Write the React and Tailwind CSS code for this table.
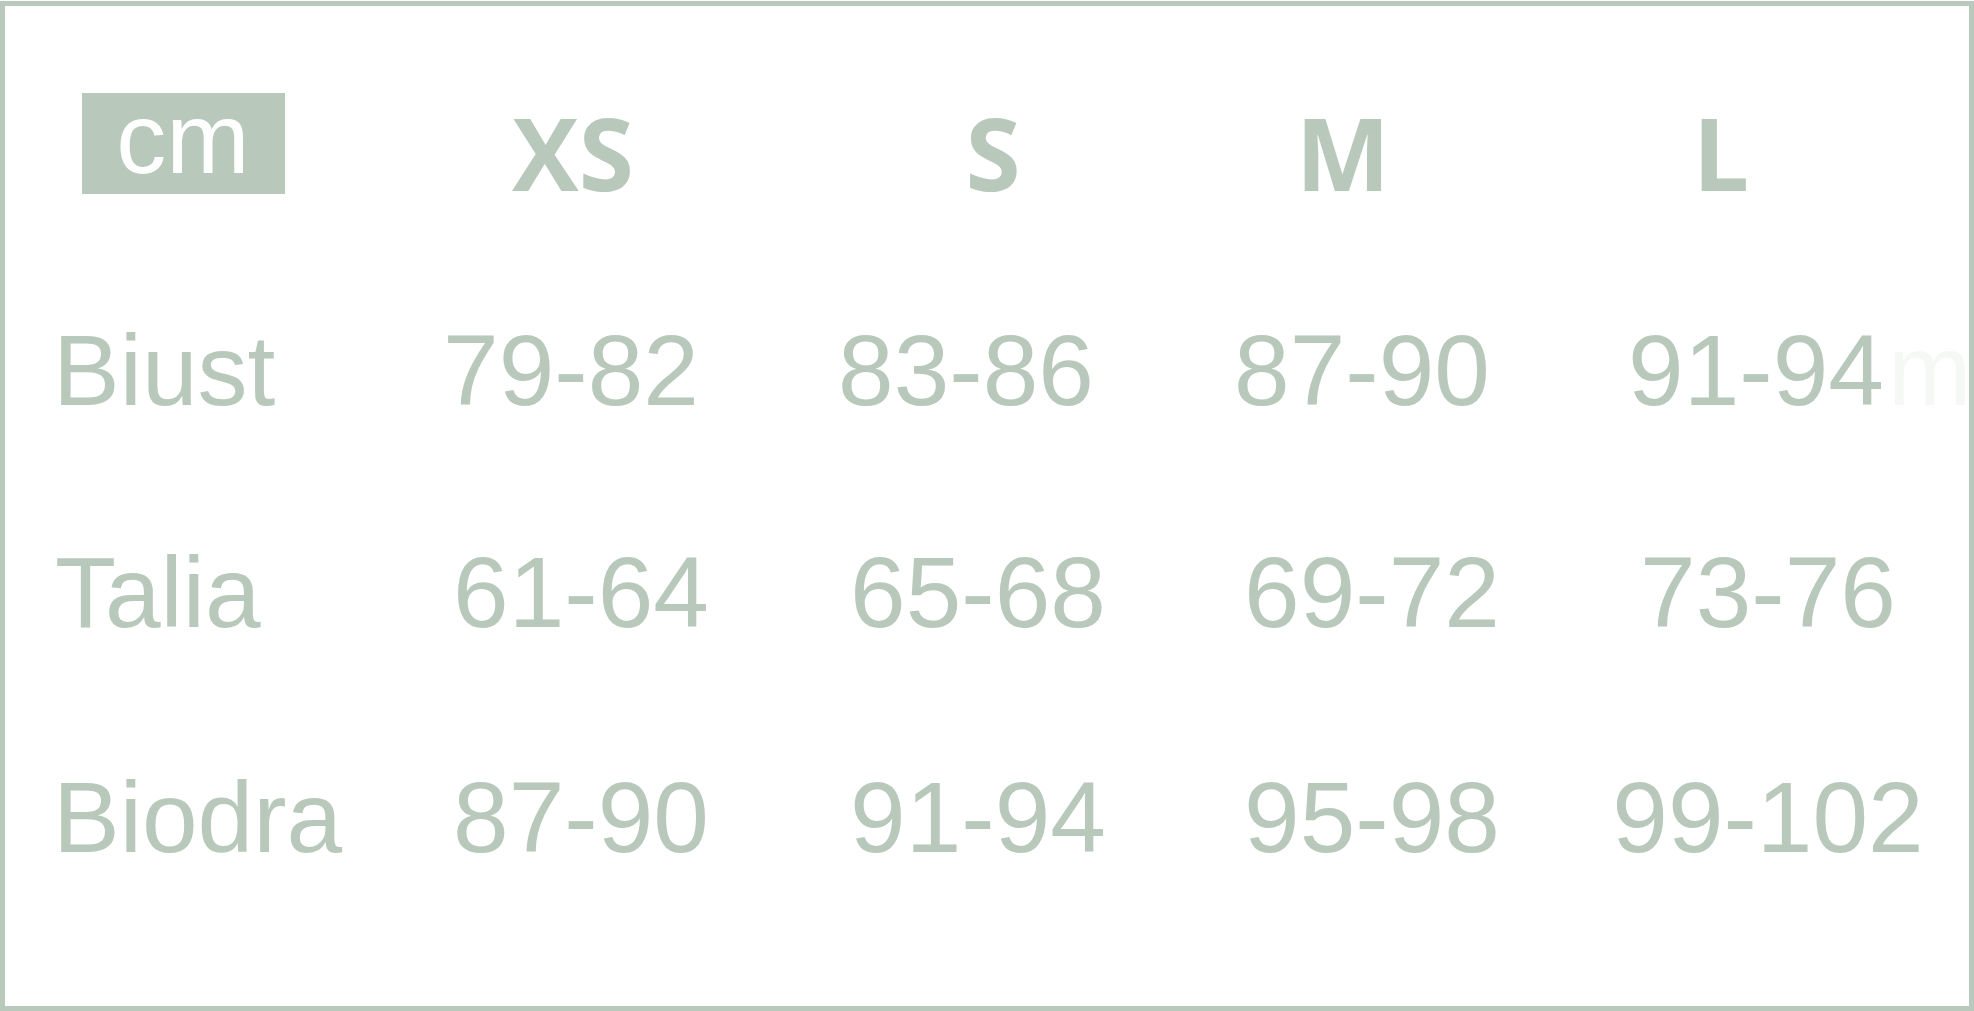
import React from "react";

const sans = { fontFamily: '"Liberation Sans", Arial, sans-serif' };

function Value({ children, extra }) {
  return (
    <div className="flex justify-center">
      <span className="relative block whitespace-nowrap text-[100px] leading-[100px] text-[#b8c9bc]">
        {children}
        {extra}
      </span>
    </div>
  );
}

export default function App() {
  return (
    <div className="w-[1974px] h-[1011px] bg-white pt-[1px]" style={sans}>
      <div className="h-[1010px] w-[1974px] border-[5px] border-[#b9cabd] overflow-hidden">
        {/* header */}
        <div className="mt-[87px] h-[102px] grid grid-cols-[356px_424px_416px_284px_472px]">
          <div className="flex justify-center">
            <div className="w-[203px] h-[101px] bg-[#b8c9bc] flex items-center justify-center">
              <span className="text-white text-[100px] leading-[100px] pb-[12px]">
                cm
              </span>
            </div>
          </div>
          {["XS", "S", "M", "L"].map((s) => (
            <div key={s} className="flex justify-center">
              <span className="block mt-[8px] text-[100px] leading-[102px] font-bold text-[#b8c9bc] font-['Open_Sans',sans-serif]">
                {s}
              </span>
            </div>
          ))}
        </div>

        {/* Biust */}
        <div className="mt-[125px] h-[100px] grid grid-cols-[366px_400px_390px_402px_386px]">
          <div className="pl-[48px] text-[100px] leading-[100px] text-[#b8c9bc]">Biust</div>
          <Value>79-82</Value>
          <Value>83-86</Value>
          <Value>87-90</Value>
          <Value
            extra={
              <span className="absolute left-full top-0 ml-[4px] text-[#f6f8f6]">m</span>
            }
          >
            91-94
          </Value>
        </div>

        {/* Talia */}
        <div className="mt-[122px] h-[100px] grid grid-cols-[376px_400px_394px_394px_398px]">
          <div className="pl-[50px] text-[100px] leading-[100px] text-[#b8c9bc]">Talia</div>
          <Value>61-64</Value>
          <Value>65-68</Value>
          <Value>69-72</Value>
          <Value>73-76</Value>
        </div>

        {/* Biodra */}
        <div className="mt-[125px] h-[100px] grid grid-cols-[376px_400px_394px_394px_398px]">
          <div className="pl-[48px] text-[100px] leading-[100px] text-[#b8c9bc]">Biodra</div>
          <Value>87-90</Value>
          <Value>91-94</Value>
          <Value>95-98</Value>
          <Value>99-102</Value>
        </div>
      </div>
    </div>
  );
}
